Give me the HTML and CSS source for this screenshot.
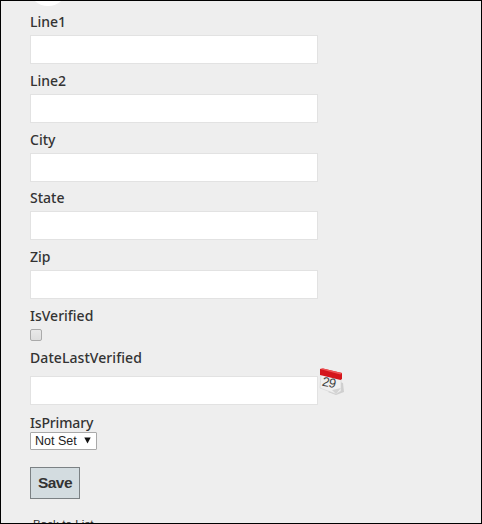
FILE: index.html
```html
<!DOCTYPE html>
<html lang="en">
<head>
    <meta charset="UTF-8">
    <meta name="viewport" content="width=device-width, initial-scale=1.0">
    <title>Edit Address</title>
    <link rel="stylesheet" href="styles.css">
</head>
<body>
    <div id="page">
        <div class="bubble"></div>
        <form id="address-form">
            <div class="field">
                <label for="line1">Line1</label>
                <input type="text" id="line1">
            </div>
            <div class="field">
                <label for="line2">Line2</label>
                <input type="text" id="line2">
            </div>
            <div class="field">
                <label for="city">City</label>
                <input type="text" id="city">
            </div>
            <div class="field">
                <label for="state">State</label>
                <input type="text" id="state">
            </div>
            <div class="field">
                <label for="zip">Zip</label>
                <input type="text" id="zip">
            </div>
            <div class="field check-field">
                <label for="is-verified">IsVerified</label>
                <input type="checkbox" id="is-verified">
            </div>
            <div class="field date-field">
                <label for="date-verified">DateLastVerified</label>
                <div class="date-row">
                    <input type="text" id="date-verified">
                    <svg class="calendar" width="28" height="30" viewBox="0 0 28 30">
                        <path d="M21 14 L24 15 L25 24 L17 27 L9 24 Z" fill="#cfcfcf"/>
                        <path d="M2 6 L22 11 L22 23 L17 26 L1 20 Z" fill="#f0f0f0" stroke="#d3d3d3" stroke-width=".6"/>
                        <path d="M13 22 L22 20 L17 26 Z" fill="#d4d4d4"/>
                        <path d="M1 1 L4 0.5 L23 5 L23 11 L21.5 12 L1 7 Z" fill="#d4151b"/>
                        <path d="M1 1 L4 0.5 L23 5 L21.5 6.5 Z" fill="#ee5253"/>
                        <text x="2.5" y="17.5" transform="rotate(12 3 17)" class="day">29</text>
                    </svg>
                </div>
            </div>
            <div class="field select-field">
                <label for="is-primary">IsPrimary</label>
                <div class="select" id="is-primary" tabindex="0">
                    <span>Not Set</span>
                    <svg width="7" height="7" viewBox="0 0 7 7"><path d="M0.3 0.5 H6.7 L3.5 6.5 Z" fill="#111"/></svg>
                </div>
            </div>
            <button type="button">Save</button>
        </form>
        <a class="back">Back to List</a>
    </div>
</body>
</html>
```
FILE: styles.css
```css
html, body {
    margin: 0;
    padding: 0;
    height: 100%;
    overflow: hidden;
}
#page {
    position: relative;
    box-sizing: border-box;
    height: 524px;
    border: 1px solid #000;
    background-color: #eee;
    padding: 11px 0 0 29px;
    overflow: hidden;
}
.bubble {
    position: absolute; /* bottom of the round picture above the form */
    top: -31px;
    left: 28px;
    width: 38px;
    height: 36px;
    border-radius: 50%;
    background: #fff;
}
.field {
    height: 58.8px;
}
label {
    display: block;
    height: 23px;
    line-height: 20px;
    font-family: "Noto Sans", sans-serif;
    font-size: 14px;
    font-weight: 500;
    color: #333;
}
input[type="text"] {
    display: block;
    box-sizing: border-box;
    width: 288px;
    height: 29px;
    margin: 0;
    border: 1px solid #e2e2e2;
    background: #fff;
    outline: none;
}
.check-field {
    height: 42px;
}
.check-field label {
    height: 24px;
}
input[type="checkbox"] {
    appearance: none;
    display: block;
    box-sizing: border-box;
    width: 12px;
    height: 12px;
    margin: -1px 0 0;
    border: 1px solid #aaa;
    border-radius: 2px;
    background: linear-gradient(#e9e9e9, #dedede);
}
.date-field {
    height: 65px;
}
.date-field label {
    height: 19px;
    letter-spacing: 0.07px;
}
.date-row {
    display: flex;
    align-items: flex-start;
}
.date-row input {
    margin-top: 9px;
}
.calendar {
    margin: 1px 0 0 1px;
}
.day {
    font-family: "Liberation Sans", sans-serif;
    font-size: 13px;
    letter-spacing: -0.5px;
    fill: #444;
}
.select-field {
    height: 54px;
}
.select-field label {
    height: 19px;
    letter-spacing: -0.15px;
}
.select {
    display: flex;
    align-items: center;
    justify-content: space-between;
    box-sizing: border-box;
    width: 67px;
    height: 18px;
    padding: 0 5px 0 4px;
    border: 1px solid #a9a9a9;
    border-radius: 1px;
    background: #fff;
    font-family: "Liberation Sans", Arial, sans-serif;
    font-size: 12.5px;
    color: #222;
}
button {
    display: block;
    width: 50px;
    height: 32px;
    padding: 0;
    border: 1px solid #7b8184;
    background: #d3dce0;
    font-family: "Liberation Sans", Arial, sans-serif;
    font-size: 15.5px;
    font-weight: bold;
    letter-spacing: -0.5px;
    color: #333;
}
.back {
    display: block;
    margin: 19px 0 0 3px;
    font-family: "Liberation Sans", Arial, sans-serif;
    font-size: 11.5px;
    line-height: 13px;
    letter-spacing: 0.1px;
    color: #333;
}
```
